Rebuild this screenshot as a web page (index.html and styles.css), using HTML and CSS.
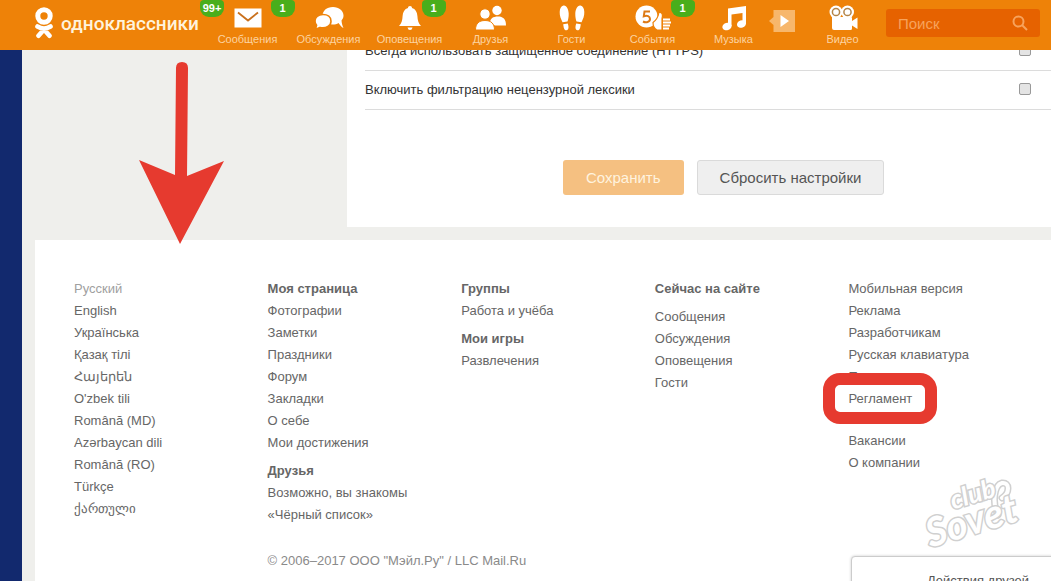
FILE: index.html
```html
<!DOCTYPE html>
<html lang="ru">
<head>
    <meta charset="UTF-8">
    <meta name="viewport" content="width=device-width, initial-scale=1.0">
    <title>Одноклассники</title>
    <link rel="stylesheet" href="styles.css">
</head>
<body>
    <header class="toolbar">
        <a class="logo" href="#">
            <svg width="20" height="32" viewBox="0 0 20 32" fill="none" stroke="#fff" stroke-linecap="round">
                <circle cx="10" cy="9" r="6.2" stroke-width="5"/>
                <path d="M3.5 19.5Q10 23.500 16.500 19.500M10 22.500L4.500 28.800M10 22.500L15.500 28.800" stroke-width="4.600"/>
            </svg>
            <span>одноклассники</span>
            <b class="badge">99+</b>
        </a>
        <nav class="nav">
            <a class="nav-item" href="#">
                <span class="icon icon-wide">
                    <svg width="28" height="20" viewBox="0 0 28 20">
                        <rect x="0.500" y="0.500" width="27" height="19" fill="#fff"/>
                        <path d="M4 4.500L14 12.500L24 4.500" fill="none" stroke="#c9701c" stroke-width="1.800"/>
                    </svg>
                    <b class="badge">1</b>
                </span>
                Сообщения
            </a>
            <a class="nav-item" href="#">
                <span class="icon">
                    <svg width="30" height="24" viewBox="0 0 30 24" fill="#fff">
                        <path d="M19 1C12.500 1 8.500 5 8.500 9.800S12.500 18.500 18.500 18.500C21 18.500 23 18 24.500 17C26 19 27.500 21.500 29.500 22C28.500 20 27.800 17.500 27.500 14.500C28.800 13 29.500 11.500 29.500 9.500C29.500 4.800 25 1 19 1Z"/>
                        <path d="M9 8.500C4 8.500 1 11.500 1 15C1 16.500 1.600 18 2.600 19.200C2.400 20.800 1.700 22 .7 23C3 23 4.700 22.300 6 21.500C12.500 22.800 17 19.500 17 15.200S13.500 8.500 9 8.500Z" stroke="#ee8208" stroke-width="1.600"/>
                    </svg>
                </span>
                Обсуждения
            </a>
            <a class="nav-item" href="#">
                <span class="icon">
                    <svg width="24" height="26" viewBox="0 0 24 26" fill="#fff">
                        <path d="M12 1C10.700 1 10 1.800 10 3C6.500 4 4.800 7 4.600 11C4.400 15.500 3.500 18.500 1 21H23C20.500 18.500 19.600 15.500 19.400 11C19.200 7 17.500 4 14 3C14 1.800 13.300 1 12 1Z"/>
                        <path d="M9.500 22.500H14.500Q14 25 12 25T9.500 22.500Z"/>
                    </svg>
                    <b class="badge">1</b>
                </span>
                Оповещения
            </a>
            <a class="nav-item" href="#">
                <span class="icon">
                    <svg width="32" height="26" viewBox="0 0 32 26" fill="#fff">
                        <circle cx="22" cy="5.500" r="4.700"/>
                        <path d="M15 18C15 13.500 18 11.500 23 11.500C28 11.500 31 14 31 20.500H20Z"/>
                        <circle cx="10" cy="9" r="5.200" stroke="#ee8208" stroke-width="1"/>
                        <path d="M.5 25C.5 18.500 4 15.500 10 15.500C16 15.500 19.500 18.500 19.500 25Z" stroke="#ee8208" stroke-width="1"/>
                    </svg>
                </span>
                Друзья
            </a>
            <a class="nav-item" href="#">
                <span class="icon">
                    <svg width="28" height="28" viewBox="0 0 28 28" fill="#fff">
                        <path d="M5.500 1.500C8.500 1 10.500 5 10.700 9.500C10.800 13 10.200 15.500 9.500 17.500L4.500 18.200C3 15 1.500 12 1.700 8C1.800 4.500 3 2 5.500 1.500Z"/>
                        <path d="M5.200 20.200L9.800 19.500C10.800 22.500 11 26 8.500 26.300C6 26.500 5.600 23 5.200 20.200Z"/>
                        <path d="M22.500 1.500C19.500 1 17.500 5 17.300 9.500C17.200 13 17.800 15.500 18.500 17.500L23.500 18.200C25 15 26.500 12 26.300 8C26.200 4.500 25 2 22.500 1.500Z"/>
                        <path d="M22.800 20.200L18.200 19.500C17.200 22.500 17 26 19.500 26.300C22 26.500 22.400 23 22.800 20.200Z"/>
                    </svg>
                </span>
                Гости
            </a>
            <a class="nav-item" href="#">
                <span class="icon">
                    <svg width="36" height="26" viewBox="0 0 36 26" fill="#fff">
                        <circle cx="11.500" cy="11.500" r="11"/>
                        <path d="M15 6.500H9.500L8.800 11.200C12 10 15 11.200 15 14C15 17.200 11 18 8 16.500" fill="none" stroke="#dd7a16" stroke-width="2"/>
                        <path d="M18 17.500C21 15.500 23 12.500 24 7.500C27.500 7 28 10 27 13.500V25H22C20 24 18 21.500 18 17.500Z" stroke="#ee8208" stroke-width="1.200"/>
                        <path d="M28 13.500H35V15.500H28ZM28 16.500H36V18.500H28ZM28 19.500H35V21.500H28ZM28 22.500H34V24.500H28Z"/>
                    </svg>
                    <b class="badge">1</b>
                </span>
                События
            </a>
            <a class="nav-item" href="#">
                <span class="icon">
                    <svg width="26" height="26" viewBox="0 0 26 26" fill="#fff">
                        <path d="M7 3.500L25 1V19H21.500V8L10.500 9.600V21H7Z"/>
                        <ellipse cx="6" cy="21.500" rx="4.700" ry="3.600" transform="rotate(-18 6 21.500)"/>
                        <ellipse cx="20.500" cy="19" rx="4.600" ry="3.600" transform="rotate(-18 20.500 19)"/>
                    </svg>
                </span>
                Музыка
            </a>
            <button class="player" type="button" aria-label="Плеер">
                <svg width="28" height="24" viewBox="0 0 28 24">
                    <path d="M5.500 1H27V23H5.500V16L1 12L5.500 8Z" fill="#f7b76c"/>
                    <path d="M12.500 6L21 12L12.500 18Z" fill="#fff"/>
                </svg>
            </button>
            <a class="nav-item" href="#">
                <span class="icon">
                    <svg width="30" height="26" viewBox="0 0 30 26" fill="#fff">
                        <circle cx="8" cy="7" r="6.500"/>
                        <circle cx="19.500" cy="7" r="6.500"/>
                        <path d="M4 12H23Q24 12 24 13V16L29.500 12.500V24L24 20.500V23.500Q24 25 22.500 25H6Q4 25 4 23Z"/>
                        <circle cx="8" cy="7" r="3.600" fill="none" stroke="#b3854a" stroke-width="1.500"/>
                        <circle cx="19.500" cy="7" r="3.600" fill="none" stroke="#b3854a" stroke-width="1.500"/>
                    </svg>
                </span>
                Видео
            </a>
        </nav>
        <form class="search">
            <input type="text" placeholder="Поиск" aria-label="Поиск">
            <button type="button" aria-label="Найти">
                <svg width="16" height="16" viewBox="0 0 16 16" fill="none" stroke="#f7a35c" stroke-width="2">
                    <circle cx="6.500" cy="6.500" r="5"/>
                    <path d="M10 10L15 15"/>
                </svg>
            </button>
        </form>
    </header>

    <div class="page">
        <main class="settings">
            <div class="setting">
                <label for="https">Всегда использовать защищенное соединение (HTTPS)</label>
                <input type="checkbox" id="https">
            </div>
            <div class="setting">
                <label for="filter">Включить фильтрацию нецензурной лексики</label>
                <input type="checkbox" id="filter">
            </div>
            <div class="actions">
                <button class="btn btn-save" type="button">Сохранить</button>
                <button class="btn btn-reset" type="button">Сбросить настройки</button>
            </div>
        </main>

        <footer class="footer">
            <div class="columns">
                <ul class="links">
                    <li class="current">Русский</li>
                    <li><a href="#">English</a></li>
                    <li><a href="#">Українська</a></li>
                    <li><a href="#">Қазақ тілі</a></li>
                    <li><a href="#">Հայերեն</a></li>
                    <li><a href="#">O'zbek tili</a></li>
                    <li><a href="#">Română (MD)</a></li>
                    <li><a href="#">Azərbaycan dili</a></li>
                    <li><a href="#">Română (RO)</a></li>
                    <li><a href="#">Türkçe</a></li>
                    <li><a href="#">ქართული</a></li>
                </ul>
                <ul class="links">
                    <li class="title"><a href="#">Моя страница</a></li>
                    <li><a href="#">Фотографии</a></li>
                    <li><a href="#">Заметки</a></li>
                    <li><a href="#">Праздники</a></li>
                    <li><a href="#">Форум</a></li>
                    <li><a href="#">Закладки</a></li>
                    <li><a href="#">О себе</a></li>
                    <li><a href="#">Мои достижения</a></li>
                    <li class="title"><a href="#">Друзья</a></li>
                    <li><a href="#">Возможно, вы знакомы</a></li>
                    <li><a href="#">«Чёрный список»</a></li>
                </ul>
                <ul class="links">
                    <li class="title"><a href="#">Группы</a></li>
                    <li><a href="#">Работа и учёба</a></li>
                    <li class="title"><a href="#">Мои игры</a></li>
                    <li><a href="#">Развлечения</a></li>
                </ul>
                <ul class="links">
                    <li class="title title-spaced"><a href="#">Сейчас на сайте</a></li>
                    <li><a href="#">Сообщения</a></li>
                    <li><a href="#">Обсуждения</a></li>
                    <li><a href="#">Оповещения</a></li>
                    <li><a href="#">Гости</a></li>
                </ul>
                <ul class="links">
                    <li><a href="#">Мобильная версия</a></li>
                    <li><a href="#">Реклама</a></li>
                    <li><a href="#">Разработчикам</a></li>
                    <li><a href="#">Русская клавиатура</a></li>
                    <li><a href="#">Помощь</a></li>
                    <li class="marked"><a href="#">Регламент</a></li>
                    <li><a href="#">Вакансии</a></li>
                    <li><a href="#">О компании</a></li>
                </ul>
            </div>
            <p class="copyright">© 2006–2017 ООО "Мэйл.Ру" / LLC Mail.Ru</p>
        </footer>
    </div>

    <svg class="arrow" width="88" height="188" viewBox="0 0 88 188">
        <path d="M38 10Q38 4 44 4T50 10L49 118L86 103L42 186L1 102L37 117Z" fill="#e63a2f"/>
    </svg>

    <svg class="watermark" width="116" height="80" viewBox="0 0 116 80">
        <g fill="none" stroke-linecap="round">
            <path d="M84 42C78 30 80 12 88 10C96 9 96 20 88 25" stroke="#d0d0d0" stroke-width="7"/>
            <path d="M84 42C78 30 80 12 88 10C96 9 96 20 88 25" stroke="#fff" stroke-width="4"/>
        </g>
        <g transform="rotate(-17 55 40)">
            <text class="mark-big" x="8" y="62">Sovet</text>
            <text class="mark-small" x="41" y="32">club</text>
        </g>
    </svg>

    <aside class="toast">Действия друзей</aside>
</body>
</html>
```
FILE: styles.css
```css
* {
    box-sizing: border-box;
}

body {
    margin: 0;
    height: 100vh;
    overflow: hidden;
    position: relative;
    display: flex;
    flex-direction: column;
    font-family: "Liberation Sans", Arial, sans-serif;
    font-size: 13px;
    color: #333;
    background-color: #efefec;
}

a {
    color: inherit;
    text-decoration: none;
}

/* top toolbar */
.toolbar {
    position: relative;
    z-index: 2;
    flex: none;
    display: flex;
    height: 50px;
    background-color: #ee8208;
}

.logo {
    position: relative;
    flex: none;
    display: flex;
    align-items: center;
    gap: 7px;
    width: 207px;
    padding-left: 34px;
    color: #fff3dc;
    font-family: Roboto, sans-serif;
    font-size: 19px;
    font-weight: 500;
}

.logo svg {
    flex: none;
    margin-top: -4px;
}

.logo span {
    margin-top: -4px;
}

.badge {
    position: absolute;
    top: 0;
    left: 100%;
    width: 24px;
    height: 17px;
    border-radius: 4px 4px 9px 9px;
    background-color: #49ae1b;
    color: #fff;
    font-family: "Liberation Sans", Arial, sans-serif;
    font-size: 11px;
    line-height: 16px;
    text-align: center;
}

.logo .badge {
    left: auto;
    right: -17px;
}

.nav {
    flex: none;
    display: flex;
}

.nav-item {
    width: 81px;
    display: flex;
    flex-direction: column;
    align-items: center;
    color: #fcd3a0;
    font-size: 11px;
    line-height: 14px;
}

.icon {
    position: relative;
    display: flex;
    align-items: center;
    justify-content: center;
    height: 32px;
    padding-top: 4px;
}

.icon-wide {
    width: 46px;
}

.player {
    width: 28px;
    padding: 0 0 6px;
    margin: 0 6px 0 -6px;
    border: none;
    background: none;
    cursor: pointer;
}

.search {
    flex: 1;
    min-width: 0;
    display: flex;
    align-items: center;
    height: 28px;
    margin: 9px 11px 0 3px;
    padding: 0 12px;
    border-radius: 3px;
    background-color: #e66200;
}

.search input {
    flex: 1;
    min-width: 0;
    padding: 0;
    border: none;
    outline: none;
    background: none;
    color: #fff;
    font-family: inherit;
    font-size: 15px;
}

.search input::placeholder {
    color: #f7a35c;
    opacity: 1;
}

.search button {
    display: flex;
    padding: 0;
    border: none;
    background: none;
}

/* page */
.page {
    flex: 1;
    display: flex;
    flex-direction: column;
    border-left: 22px solid #12296e;
}

.settings {
    margin: -18px 0 0 325px;
    padding-left: 18px;
    background-color: #fff;
}

.setting {
    display: flex;
    align-items: center;
    justify-content: space-between;
    height: 39px;
    padding: 0 20px 2px 0;
    border-bottom: 1px solid #dcdcdc;
}

.setting input {
    appearance: none;
    width: 12px;
    height: 12px;
    margin: 0;
    border: 1px solid #999;
    border-radius: 2px;
    background-color: #e4e4e4;
}

.actions {
    display: flex;
    gap: 13px;
    padding: 50px 0 32px 198px;
}

.btn {
    height: 35px;
    padding: 0 22px;
    border: 1px solid transparent;
    border-radius: 3px;
    font-family: inherit;
    font-size: 15px;
    cursor: pointer;
}

.btn-save {
    background-color: #f5c081;
    color: #fff3df;
}

.btn-reset {
    border-color: #dadada;
    background-color: #efefef;
    color: #555;
}

/* footer */
.footer {
    flex: 1;
    margin: 13px 0 0 13px;
    padding: 38px 9px 0 39px;
    background-color: #fff;
    color: #666;
}

.columns {
    display: grid;
    grid-template-columns: repeat(5, 1fr);
}

.links {
    margin: 0;
    padding: 0;
    list-style: none;
    line-height: 22px;
}

.links li {
    height: 22px;
}

.links .title {
    font-weight: bold;
}

.links li + .title {
    margin-top: 6px;
}

.links .title-spaced {
    margin-bottom: 6px;
}

.links .current {
    color: #a0a0a0;
}

.links .marked {
    margin-bottom: 20px;
}

.marked a {
    position: relative;
}

/* red frame around the link */
.marked a::after {
    content: "";
    position: absolute;
    inset: -18px -25px;
    border: 12px solid #e63a2f;
    border-radius: 17px;
}

.copyright {
    margin: 24px 0 0;
    padding-left: 20%;
    line-height: 22px;
    color: #8a8a8a;
}

.arrow {
    position: absolute;
    top: 58px;
    left: 138px;
    z-index: 3;
}

.watermark {
    position: absolute;
    right: 21px;
    bottom: 28px;
}

.watermark text {
    fill: #fff;
    stroke: #d0d0d0;
    stroke-width: 3px;
    paint-order: stroke;
    font-family: Lato, sans-serif;
    font-style: italic;
    font-weight: bold;
}

.watermark .mark-small {
    font-size: 26px;
}

.watermark .mark-big {
    font-size: 40px;
}

.toast {
    position: absolute;
    right: -4px;
    bottom: -10px;
    width: 204px;
    height: 35px;
    padding: 16px 0 0 75px;
    border: 1px solid #ccc;
    border-radius: 4px;
    box-shadow: 0 0 3px rgba(0, 0, 0, 0.2);
    background-color: #fff;
    color: #555;
    line-height: 16px;
    white-space: nowrap;
}
```
